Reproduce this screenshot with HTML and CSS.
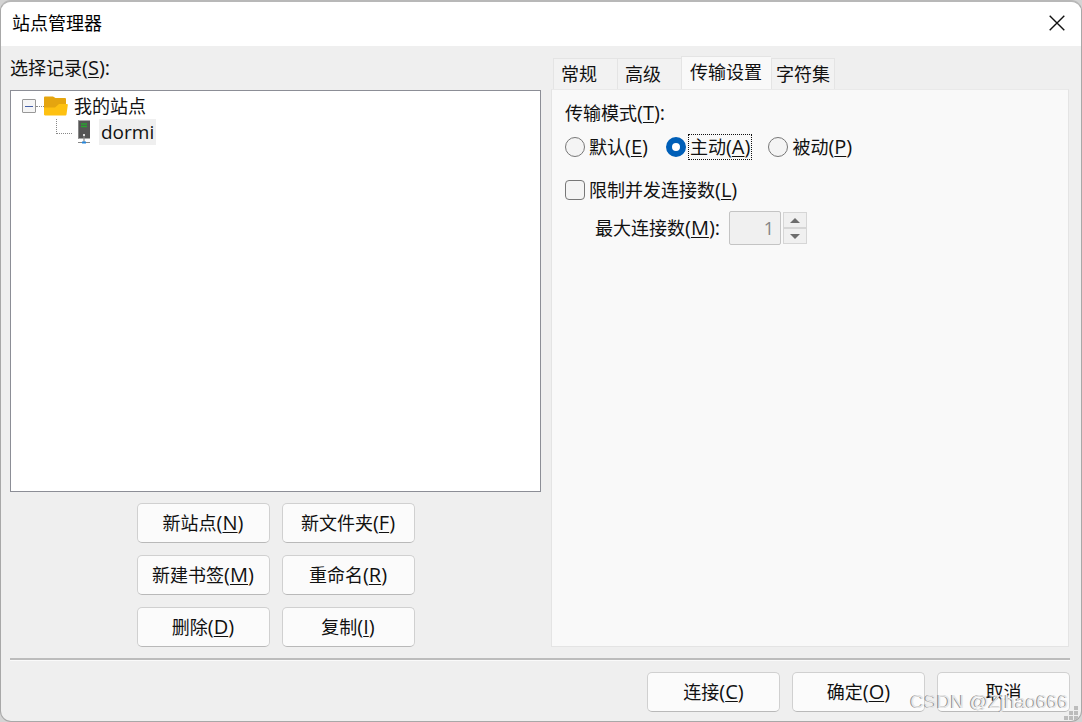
FILE: index.html
```html
<!DOCTYPE html>
<html lang="zh-CN">
<head>
<meta charset="utf-8">
<title>站点管理器</title>
<link rel="stylesheet" href="styles.css">
</head>
<body>
<div class="dialog">
  <header class="titlebar">
    <h1 class="title">站点管理器</h1>
    <button class="close" type="button" aria-label="关闭">
      <svg width="16" height="16" viewBox="0 0 16 16" fill="none" stroke="#111" stroke-width="1.4"><path d="M.7 .7 15.3 15.3M15.3 .7.7 15.3"/></svg>
    </button>
  </header>

  <main class="content">
    <section class="sites">
      <h2 class="caption" id="sites-label">选择记录<span class="key">(<u>S</u>):</span></h2>
      <ul class="tree" role="tree" aria-labelledby="sites-label">
        <li role="treeitem" aria-expanded="true">
          <div class="node">
            <button class="toggle" type="button" aria-label="折叠"></button>
            <span class="link"></span>
            <svg class="folder" width="24" height="20" viewBox="0 0 24 20"><path d="M0 1.5Q0 .5 1 .5H9L11.500 2H21Q22 2 22 3V19H1.500Q0 19 0 17.500Z" fill="#e5a50f"/><path d="M1 19.500Q0 19.500 0 17.500V12.500Q0 11.500 1 11.500H11L15 8H23Q24 8 23.800 9L22.500 18.500Q22.300 19.500 21.500 19.500Z" fill="#fec111"/></svg>
            <span class="name">我的站点</span>
          </div>
          <ul class="branch" role="group">
            <li class="node" role="treeitem" aria-selected="true">
              <span class="elbow"></span>
              <svg class="server" width="14" height="24" viewBox="0 0 14 24"><rect x="1" y=".5" width="12" height="18" fill="#555"/><path d="M1.500 .500V18.500" stroke="#888"/><path d="M4 4h6M4 6.500h6" stroke="#27a32f" stroke-width="1.500"/><path d="M7 14v8" stroke="#888" stroke-width="1.200"/><path d="M6 14h2v2H6z" fill="#ddd"/><path d="M1 22.500h12" stroke="#888" stroke-width="1.200"/><path d="M5 21.500h4v2H5z" fill="#2586dc"/></svg>
              <span class="name selected">dormi</span>
            </li>
          </ul>
        </li>
      </ul>
      <div class="actions">
        <button class="btn" type="button">新站点<span class="key">(<u>N</u>)</span></button>
        <button class="btn" type="button">新文件夹<span class="key">(<u>F</u>)</span></button>
        <button class="btn" type="button">新建书签<span class="key">(<u>M</u>)</span></button>
        <button class="btn" type="button">重命名<span class="key">(<u>R</u>)</span></button>
        <button class="btn" type="button">删除<span class="key">(<u>D</u>)</span></button>
        <button class="btn" type="button">复制<span class="key">(<u>I</u>)</span></button>
      </div>
    </section>

    <section class="settings">
      <div class="tabs" role="tablist">
        <button class="tab" type="button" role="tab">常规</button>
        <button class="tab" type="button" role="tab">高级</button>
        <button class="tab active" type="button" role="tab" aria-selected="true">传输设置</button>
        <button class="tab" type="button" role="tab">字符集</button>
      </div>
      <div class="panel" role="tabpanel">
        <fieldset class="modes">
          <legend class="legend">传输模式<span class="key">(<u>T</u>):</span></legend>
          <div class="options">
            <label class="option"><input class="radio" type="radio" name="mode"><span class="text">默认<span class="key">(<u>E</u>)</span></span></label>
            <label class="option"><input class="radio" type="radio" name="mode" checked><span class="text focused">主动<span class="key">(<u>A</u>)</span></span></label>
            <label class="option"><input class="radio" type="radio" name="mode"><span class="text">被动<span class="key">(<u>P</u>)</span></span></label>
          </div>
        </fieldset>
        <label class="option limit"><input class="check" type="checkbox"><span class="text">限制并发连接数<span class="key">(<u>L</u>)</span></span></label>
        <div class="maximum">
          <label for="max">最大连接数<span class="key">(<u>M</u>):</span></label>
          <input class="number" id="max" type="text" inputmode="numeric" value="1" disabled>
          <div class="spin">
            <button class="step" type="button" aria-label="增加" disabled><svg width="10" height="5" viewBox="0 0 10 5"><path d="M0 5 5 0l5 5z" fill="#6d6d6d"/></svg></button>
            <button class="step" type="button" aria-label="减少" disabled><svg width="10" height="5" viewBox="0 0 10 5"><path d="M0 0l5 5 5-5z" fill="#6d6d6d"/></svg></button>
          </div>
        </div>
      </div>
    </section>
  </main>

  <footer class="footer">
    <button class="btn" type="button">连接<span class="key">(<u>C</u>)</span></button>
    <button class="btn" type="button">确定<span class="key">(<u>O</u>)</span></button>
    <button class="btn" type="button">取消</button>
  </footer>
  <svg class="grip" width="14" height="14" viewBox="0 0 14 14" fill="#bcbcbc"><path d="M10 0h4v4h-4zM10 5h4v4h-4zM5 5h4v4H5zM10 10h4v4h-4zM5 10h4v4H5zM0 10h4v4H0z"/></svg>
  <span class="watermark">CSDN @Zjhao666</span>
</div>
</body>
</html>
```
FILE: styles.css
```css
* {
  box-sizing: border-box;
}

body {
  margin: 0;
  background: #d4d4d4;
  color: #111;
  font: 18px/24px "Open Sans", "Noto Sans CJK SC", sans-serif;
}

button,
input {
  margin: 0;
  padding: 0;
  color: inherit;
  font: inherit;
}

h1,
h2,
ul {
  margin: 0;
  padding: 0;
  font-size: inherit;
  font-weight: 400;
  list-style: none;
}

u {
  text-decoration-thickness: 1px;
  text-underline-offset: 2px;
}

.key {
  font-size: 20px;
  line-height: 20px;
}

.dialog {
  position: relative;
  display: flex;
  flex-direction: column;
  min-height: 100vh;
  overflow: hidden;
  border: 1px solid #a8a8a8;
  border-top: 2px solid #b8b8b8;
  border-radius: 11px;
  background: #efefef;
}

.titlebar {
  display: flex;
  align-items: center;
  justify-content: space-between;
  height: 44px;
  padding: 0 16px 2px 11px;
  background: #fff;
}

.title {
  color: #000;
}

.close {
  display: flex;
  border: 0;
  background: none;
}

.content {
  flex: 1;
  display: grid;
  grid-template-columns: 531fr 518fr;
  gap: 10px;
  padding: 10px 12px 11px 9px;
}

.sites,
.settings {
  display: flex;
  flex-direction: column;
}

.caption {
  margin-bottom: 10px;
}

.tree {
  flex: 1;
  padding: 2px 11px;
  border: 1px solid #8c8e96;
  background: #fff;
}

.node {
  display: flex;
  align-items: center;
  height: 26px;
}

.toggle {
  display: flex;
  align-items: center;
  justify-content: center;
  width: 14px;
  height: 14px;
  border: 1px solid #989898;
  border-radius: 1px;
  background: #f5f5f5;
}

.toggle::before {
  content: "";
  width: 8px;
  height: 1px;
  background: #4560a8;
}

.link {
  width: 8px;
  border-top: 1px dotted #888;
}

.folder {
  margin-right: 6px;
}

.branch {
  padding-left: 34px;
}

.elbow {
  align-self: flex-start;
  width: 16px;
  height: 15px;
  margin-right: 5px;
  border: 1px dotted #888;
  border-width: 0 0 1px 1px;
}

.selected {
  margin-left: 8px;
  padding: 1px 2px;
  background: #efefef;
  font-size: 19px;
}

.actions {
  display: grid;
  grid-template-columns: repeat(2, 133px);
  justify-content: center;
  gap: 12px;
  margin-top: 11px;
}

.btn {
  min-width: 133px;
  height: 40px;
  padding-bottom: 1px;
  border: 1px solid #d0d0d0;
  border-bottom-color: #b9b9b9;
  border-radius: 5px;
  background: #fbfbfb;
}

.sites .btn {
  height: 40px;
}

.tabs {
  display: flex;
  align-items: flex-end;
  height: 33px;
  padding-left: 2px;
}

.tab {
  height: 31px;
  width: 64px;
  padding: 0 7px;
  border: 1px solid #e4e4e4;
  border-width: 1px 0 0 1px;
  background: #f2f2f2;
  text-align: left;
}

.tab:last-child {
  width: auto;
  padding: 0 4px;
  border-right-width: 1px;
}

.active {
  width: 90px;
  height: 33px;
  padding: 0 8px 3px;
  background: #f9f9f9;
}

.panel {
  flex: 1;
  padding: 11px 13px;
  border: 1px solid #e4e4e4;
  border-top-color: #e9e9e9;
  background: #f9f9f9;
}

.modes {
  margin: 0;
  padding: 0;
  border: 0;
}

.legend {
  padding: 0;
}

.options {
  display: flex;
  gap: 17px;
  margin-top: 10px;
}

.option {
  display: flex;
  align-items: center;
  gap: 3px;
}

.text {
  padding: 0 1px;
}

.focused {
  outline: 1px dotted #111;
}

.radio,
.check {
  appearance: none;
  width: 20px;
  height: 20px;
  border: 1px solid #777;
  background: #f4f4f4;
}

.radio {
  border-radius: 50%;
}

.radio:checked {
  border: 6px solid #005fb8;
  background: #fff;
}

.check {
  border-radius: 4px;
}

.limit {
  margin-top: 19px;
}

.maximum {
  display: flex;
  align-items: center;
  margin: 9px 0 0 30px;
}

.number {
  width: 52px;
  height: 34px;
  margin: 0 2px 0 9px;
  padding: 0 6px 1px;
  border: 1px solid #c4c4c4;
  border-radius: 2px;
  background: #f0f0f0;
  color: #858585;
  text-align: right;
}

.spin {
  display: grid;
  width: 24px;
}

.step {
  display: flex;
  align-items: center;
  justify-content: center;
  height: 16px;
  border: 1px solid #d6d6d6;
  background: #f0f0f0;
}

.footer {
  display: flex;
  justify-content: flex-end;
  gap: 12px;
  margin: 0 11px 0 9px;
  padding: 12px 0 9px;
  border-top: 2px solid #bcbcbc;
  box-shadow: inset 0 1px #fafafa;
}

.grip {
  position: absolute;
  right: 3px;
  bottom: 1px;
}

.watermark {
  position: absolute;
  right: 13px;
  bottom: 7px;
  color: #e8e8e8;
  font: 19px/24px "Liberation Sans", Arial, sans-serif;
  text-shadow: -1px 0 #8a8a8a;
  pointer-events: none;
}
```
